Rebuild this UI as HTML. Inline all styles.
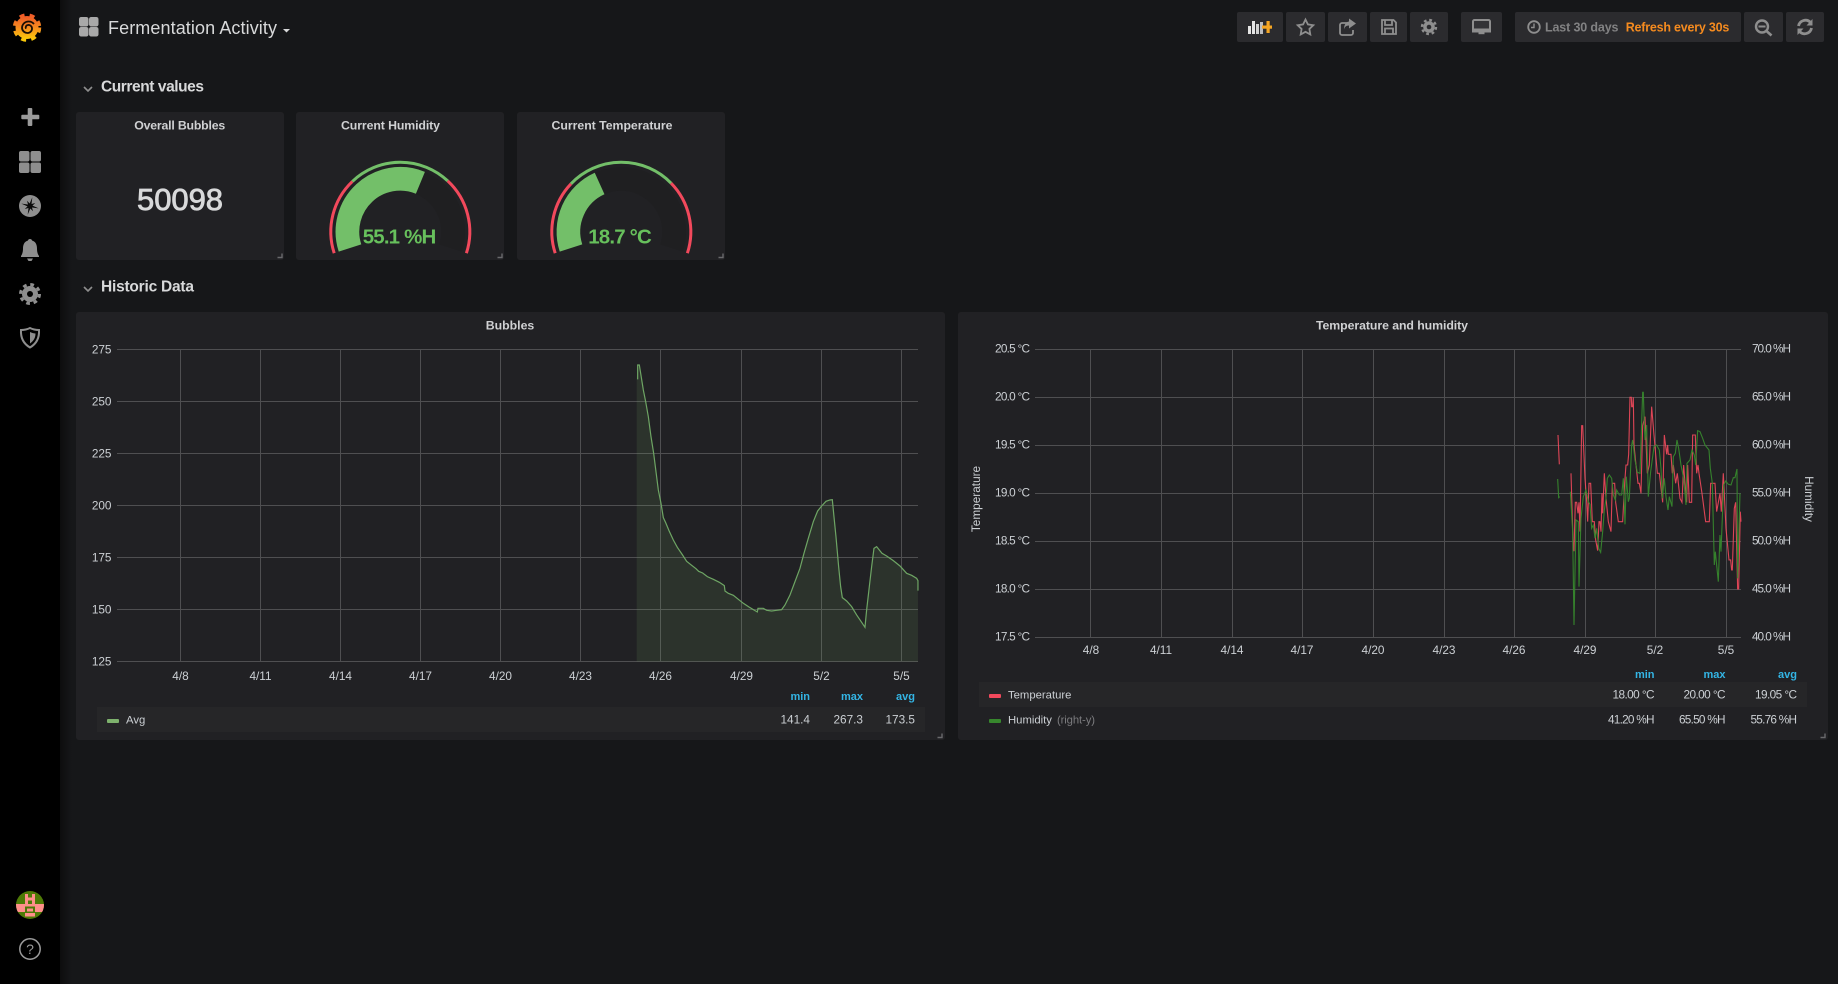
<!DOCTYPE html>
<html><head><meta charset="utf-8"><title>Fermentation Activity</title>
<style>
html,body{margin:0;padding:0;background:#161719;width:1838px;height:984px;overflow:hidden}
svg{display:block;position:absolute;left:0;top:0}
text{font-family:"Liberation Sans",sans-serif}
.t{font-size:11.8px;fill:#ccd0d4}
.b{font-size:12.3px;font-weight:bold;fill:#d0d1d3}
.h{font-size:11px;font-weight:bold;fill:#33b5e5}
.r{font-size:15.5px;font-weight:bold;fill:#d8d9da}
.g line{stroke:#4f4f51;stroke-width:1;shape-rendering:crispEdges}
.btn{fill:#2b2b2e}
.ic{fill:none;stroke:#8e8e8e;stroke-width:1.8}
.fi{fill:#8e8e8e}
</style></head><body>
<svg width="1838" height="984" viewBox="0 0 1838 984" xmlns="http://www.w3.org/2000/svg">
<defs>
<linearGradient id="sh" x1="0" x2="1" y1="0" y2="0"><stop offset="0" stop-color="#0d0d0e"/><stop offset="1" stop-color="#161719"/></linearGradient>
<linearGradient id="lg" x1="0" x2="0" y1="1" y2="0"><stop offset="0" stop-color="#fbca0a"/><stop offset=".5" stop-color="#f58a1f"/><stop offset="1" stop-color="#ef5a28"/></linearGradient>
<clipPath id="av"><circle cx="30" cy="905" r="14"/></clipPath>
</defs>
<rect width="1838" height="984" fill="#161719"/>
<rect x="60" y="0" width="12" height="984" fill="url(#sh)"/>
<rect x="0" y="0" width="60" height="984" fill="#000"/>

<!-- logo -->
<g>
<circle cx="27" cy="27.5" r="11.5" fill="url(#lg)"/>
<circle cx="27" cy="27.5" r="12.5" fill="none" stroke="url(#lg)" stroke-width="3.5" stroke-dasharray="5 5.2"/>
<path d="M26,28.7 A2.5,2.5 0 0 1 28,25 A3.5,3.5 0 0 1 32,28 A4.5,4.5 0 0 1 28,33 A5.5,5.5 0 0 1 22,28 A6.5,6.5 0 0 1 28,21.5 A7,7 0 0 1 34,24" fill="none" stroke="#1a0e05" stroke-width="1.8"/>
</g>

<!-- side icons -->
<g class="fi">
<rect x="27.7" y="108" width="4.6" height="18" rx="1" fill="#9a9a9a"/><rect x="21.3" y="114.7" width="18" height="4.6" rx="1" fill="#9a9a9a"/>
<rect x="19" y="151" width="10.5" height="10.5" rx="2"/><rect x="30.5" y="151" width="10.5" height="10.5" rx="2"/><rect x="19" y="162.5" width="10.5" height="10.5" rx="2"/><rect x="30.5" y="162.5" width="10.5" height="10.5" rx="2"/>
<circle cx="30" cy="206" r="11"/>
<polygon fill="#0a0a0a" transform="rotate(15 30 206)" points="30,197 30.96,203.69 34.24,201.76 32.31,205.04 39,206 32.31,206.96 34.24,210.24 30.96,208.31 30,215 29.04,208.31 25.76,210.24 27.69,206.96 21,206 27.69,205.04 25.76,201.76 29.04,203.69"/>
<path d="M30,239 c1.5,0 2,1 2,1.5 c3.5,1 5,4 5,8 c0,4 1,6 2,7.5 l0,1 H21 v-1 c1,-1.5 2,-3.5 2,-7.5 c0,-4 1.5,-7 5,-8 c0,-.5 .5,-1.5 2,-1.5 Z M27,258.5 h6 l-1.5,2.5 h-3 Z"/>
<circle cx="30" cy="294" r="8"/><circle cx="30" cy="294" r="9.5" fill="none" stroke="#8e8e8e" stroke-width="3" stroke-dasharray="3.7 3.76"/><circle cx="30" cy="294" r="3" fill="#000"/>
<path d="M30,328 C34,330 37,330 39,330 C39.5,338 36,344 30,347.5 C24,344 20.5,338 21,330 C23,330 26,330 30,328 Z" fill="none" stroke="#8e8e8e" stroke-width="2"/>
<path d="M30,332 C32,333 34,333.5 35.5,333.5 C35.5,338 33.5,341 30,343.5 Z"/>
</g>

<!-- avatar -->
<g clip-path="url(#av)">
<rect x="16" y="891" width="28" height="28" fill="#4e7a06"/>
<g fill="#ff8f8a">
<rect x="25" y="894" width="3" height="10"/><rect x="32" y="894" width="3" height="10"/><rect x="25" y="897.5" width="10" height="3"/>
<rect x="16" y="904" width="9" height="8"/><rect x="35" y="904" width="9" height="8"/><rect x="25" y="904" width="10" height="2.5"/>
<rect x="27" y="908.5" width="6" height="3"/><rect x="25" y="913" width="10" height="3.5"/><rect x="16" y="893" width="3" height="3"/><rect x="41" y="893" width="3" height="3"/>
</g>
</g>
<!-- help -->
<circle cx="30" cy="949" r="10.2" fill="none" stroke="#9a9a9a" stroke-width="1.5"/>
<text x="30" y="954" text-anchor="middle" font-size="14" fill="#9a9a9a">?</text>

<!-- top title -->
<g fill="#a9a9a9"><rect x="79" y="17" width="9.5" height="9.5" rx="2.2"/><rect x="89" y="17" width="9.5" height="9.5" rx="2.2"/><rect x="79" y="27" width="9.5" height="9.5" rx="2.2"/><rect x="89" y="27" width="9.5" height="9.5" rx="2.2"/></g>
<text x="108" y="34" font-size="18" fill="#d8d9da" textLength="169" lengthAdjust="spacing">Fermentation Activity</text>
<polygon points="283,29 290,29 286.5,32.5" fill="#d8d9da"/>

<!-- toolbar -->
<g>
<rect class="btn" x="1237" y="12" width="46" height="30" rx="2"/>
<rect class="btn" x="1286" y="12" width="39" height="30" rx="2"/>
<rect class="btn" x="1328" y="12" width="39" height="30" rx="2"/>
<rect class="btn" x="1370" y="12" width="37" height="30" rx="2"/>
<rect class="btn" x="1410" y="12" width="38" height="30" rx="2"/>
<rect class="btn" x="1461" y="12" width="41" height="30" rx="2"/>
<rect class="btn" x="1515" y="12" width="226" height="30" rx="2"/>
<rect class="btn" x="1744" y="12" width="39" height="30" rx="2"/>
<rect class="btn" x="1786" y="12" width="38" height="30" rx="2"/>
<!-- graph+ -->
<rect x="1248" y="26" width="3" height="8" fill="#e4e4e4"/><rect x="1252" y="21" width="3" height="13" fill="#e4e4e4"/><rect x="1256" y="24" width="3" height="10" fill="#d0d0d0"/><rect x="1260" y="22" width="3" height="12" fill="#bdbdbd"/>
<rect x="1266.5" y="21" width="3.2" height="12" fill="#f5a623"/><rect x="1262" y="25.5" width="10" height="3.2" fill="#f5a623"/>
<!-- star -->
<polygon class="ic" points="1305.5,19.5 1307.9,24.4 1313.3,25.2 1309.4,29 1310.3,34.4 1305.5,31.8 1300.7,34.4 1301.6,29 1297.7,25.2 1303.1,24.4"/>
<!-- share -->
<path class="ic" d="M1349,23 h-7 a2,2 0 0 0 -2,2 v8 a2,2 0 0 0 2,2 h9 a2,2 0 0 0 2,-2 v-3"/>
<path class="fi" d="M1349,18.5 L1356,23.5 L1349,28.5 V25.5 C1346,25.5 1344.5,27 1344,29.5 C1344,24.5 1346,22 1349,21.5 Z"/>
<!-- save -->
<path class="ic" d="M1382,20 h11.5 l2.5,2.5 v11.5 h-14 Z M1385,20 v5 h7 v-5 M1385,34 v-5.5 h8 v5.5"/>
<!-- gear -->
<circle class="fi" cx="1429" cy="27" r="5.8"/><circle cx="1429" cy="27" r="7" fill="none" stroke="#8e8e8e" stroke-width="2.4" stroke-dasharray="2.75 2.75"/><circle cx="1429" cy="27" r="2.3" fill="#2b2b2e"/>
<!-- tv -->
<rect x="1473" y="20" width="17" height="11" rx="1.5" fill="#333336" stroke="#8e8e8e" stroke-width="2"/>
<rect x="1472" y="28.5" width="19" height="4" fill="#8e8e8e"/><rect x="1478.5" y="32" width="6" height="2.2" fill="#8e8e8e"/>
<!-- clock -->
<circle cx="1534" cy="27" r="5.8" fill="none" stroke="#8e8e8e" stroke-width="1.8"/><path d="M1534,23.5 V27.5 H1531" fill="none" stroke="#8e8e8e" stroke-width="1.4"/>
<text x="1545" y="31.5" font-size="12.5" font-weight="bold" fill="#828283" textLength="73.5" lengthAdjust="spacing">Last 30 days</text>
<text x="1625.7" y="31.5" font-size="12.5" font-weight="bold" fill="#f58b1f" textLength="103.6" lengthAdjust="spacing">Refresh every 30s</text>
<!-- zoom out -->
<circle cx="1762" cy="26.5" r="6" fill="none" stroke="#8e8e8e" stroke-width="2.4"/><rect x="1758.5" y="25.5" width="7" height="2" fill="#8e8e8e"/><path d="M1766.5,31 L1771.5,35.5" stroke="#8e8e8e" stroke-width="2.6"/>
<!-- refresh -->
<path d="M1798.5,26 A7,7 0 0 1 1810.5,22.5 M1811.5,28 A7,7 0 0 1 1799.5,31.5" fill="none" stroke="#8e8e8e" stroke-width="2.8"/>
<polygon class="fi" points="1812.5,19 1812.5,25.5 1806.5,25.5"/><polygon class="fi" points="1797.5,35 1797.5,28.5 1803.5,28.5"/>
</g>

<!-- rows -->
<path d="M84,87 L88,91 L92,87" fill="none" stroke="#8e8e8e" stroke-width="1.6"/>
<text class="r" x="101" y="91.5" textLength="103" lengthAdjust="spacing">Current values</text>
<path d="M84,287 L88,291 L92,287" fill="none" stroke="#8e8e8e" stroke-width="1.6"/>
<text class="r" x="101" y="291.5" textLength="93" lengthAdjust="spacing">Historic Data</text>

<!-- panels -->
<g fill="#212124">
<rect x="76" y="112" width="208" height="148" rx="3"/>
<rect x="296" y="112" width="208" height="148" rx="3"/>
<rect x="517" y="112" width="208" height="148" rx="3"/>
<rect x="76" y="312" width="869" height="428" rx="3"/>
<rect x="958" y="312" width="870" height="428" rx="3"/>
</g>
<g fill="none" stroke="#69696b" stroke-width="1.4">
<path d="M282,253.5 V257.5 H277.5"/><path d="M502,253.5 V257.5 H497.5"/><path d="M723,253.5 V257.5 H718.5"/><path d="M942,733.5 V737.5 H937.5"/><path d="M1825,733.5 V737.5 H1820.5"/>
</g>

<text class="b" x="179.7" y="129.5" text-anchor="middle" textLength="91" lengthAdjust="spacing">Overall Bubbles</text>
<text class="b" x="390.5" y="129.5" text-anchor="middle" textLength="99" lengthAdjust="spacing">Current Humidity</text>
<text class="b" x="612" y="129.5" text-anchor="middle" textLength="121" lengthAdjust="spacing">Current Temperature</text>
<text x="180" y="210" text-anchor="middle" font-size="31" fill="#d8d9da" stroke="#d8d9da" stroke-width=".8" textLength="86" lengthAdjust="spacing">50098</text>

<!-- gauge 1 -->
<g fill="none">
<path d="M350,248 A52.85,52.85 0 1 1 450.6,248" stroke="#1f1f21" stroke-width="23.7"/>
<path d="M350,248 A52.85,52.85 0 0 1 420.4,182.8" stroke="#73bf69" stroke-width="23.7"/>
<path d="M334.2,253.2 A69.5,69.5 0 0 1 352.4,181.4" stroke="#f2495c" stroke-width="3"/>
<path d="M352.4,181.4 A69.5,69.5 0 0 1 447.7,180.9" stroke="#73bf69" stroke-width="3"/>
<path d="M447.7,180.9 A69.5,69.5 0 0 1 466.4,253.2" stroke="#f2495c" stroke-width="3"/>
</g>
<text x="399.5" y="243.5" text-anchor="middle" font-size="20.5" font-weight="bold" fill="#67c05c" textLength="73.5" lengthAdjust="spacing">55.1 %H</text>
<!-- gauge 2 -->
<g fill="none">
<path d="M571,248 A52.85,52.85 0 1 1 671.6,248" stroke="#1f1f21" stroke-width="23.7"/>
<path d="M571,248 A52.85,52.85 0 0 1 599.6,183.5" stroke="#73bf69" stroke-width="23.7"/>
<path d="M555.2,253.2 A69.5,69.5 0 0 1 571,183.8" stroke="#f2495c" stroke-width="3"/>
<path d="M571,183.8 A69.5,69.5 0 0 1 671.1,183.2" stroke="#73bf69" stroke-width="3"/>
<path d="M671.1,183.2 A69.5,69.5 0 0 1 687.4,253.2" stroke="#f2495c" stroke-width="3"/>
</g>
<text x="620" y="243.5" text-anchor="middle" font-size="20.5" font-weight="bold" fill="#67c05c" textLength="63.5" lengthAdjust="spacing">18.7 °C</text>

<!-- chart 1 -->
<text class="b" x="510" y="329.5" text-anchor="middle">Bubbles</text>
<g class="g">
<line x1="117" x2="918" y1="349.5" y2="349.5"/><line x1="117" x2="918" y1="401.5" y2="401.5"/><line x1="117" x2="918" y1="453.5" y2="453.5"/><line x1="117" x2="918" y1="505.5" y2="505.5"/><line x1="117" x2="918" y1="557.5" y2="557.5"/><line x1="117" x2="918" y1="609.5" y2="609.5"/><line x1="117" x2="918" y1="661.5" y2="661.5"/>
<line x1="180.5" x2="180.5" y1="349" y2="661"/><line x1="260.5" x2="260.5" y1="349" y2="661"/><line x1="340.5" x2="340.5" y1="349" y2="661"/><line x1="420.5" x2="420.5" y1="349" y2="661"/><line x1="500.5" x2="500.5" y1="349" y2="661"/><line x1="580.5" x2="580.5" y1="349" y2="661"/><line x1="660.5" x2="660.5" y1="349" y2="661"/><line x1="741.5" x2="741.5" y1="349" y2="661"/><line x1="821.5" x2="821.5" y1="349" y2="661"/><line x1="901.5" x2="901.5" y1="349" y2="661"/>
</g>
<g transform="translate(600,340) scale(.3333)">
<path fill="#7eb26d" fill-opacity=".12" d="M110,965 L110,118 L113,75 L118,75 L122,100 L130,150 L137,185 L145,230 L153,290 L161,340 L168,395 L175,450 L183,490 L190,533 L197,548 L207,572 L220,600 L232,622 L247,644 L260,664 L275,676 L288,686 L296,694 L308,699 L322,710 L340,718 L358,727 L373,737 L375,753 L385,760 L400,766 L415,778 L430,790 L447,801 L462,810 L472,816 L474,805 L490,805 L500,811 L515,813 L530,811 L545,809 L555,795 L570,765 L585,725 L600,685 L612,640 L625,595 L640,545 L653,513 L665,498 L678,484 L690,480 L697,479 L702,530 L708,590 L716,680 L722,740 L727,773 L740,783 L755,800 L770,825 L785,847 L795,862 L800,810 L808,740 L815,680 L822,625 L830,620 L838,630 L846,640 L860,648 L880,662 L900,678 L920,700 L935,706 L950,715 L954,722 L954,965 Z"/>
<path fill="none" stroke="#6ea564" stroke-width="3.6" d="M113,118 L113,75 L118,75 L122,100 L130,150 L137,185 L145,230 L153,290 L161,340 L168,395 L175,450 L183,490 L190,533 L197,548 L207,572 L220,600 L232,622 L247,644 L260,664 L275,676 L288,686 L296,694 L308,699 L322,710 L340,718 L358,727 L373,737 L375,753 L385,760 L400,766 L415,778 L430,790 L447,801 L462,810 L472,816 L474,805 L490,805 L500,811 L515,813 L530,811 L545,809 L555,795 L570,765 L585,725 L600,685 L612,640 L625,595 L640,545 L653,513 L665,498 L678,484 L690,480 L697,479 L702,530 L708,590 L716,680 L722,740 L727,773 L740,783 L755,800 L770,825 L785,847 L795,862 L800,810 L808,740 L815,680 L822,625 L830,620 L838,630 L846,640 L860,648 L880,662 L900,678 L920,700 L935,706 L950,715 L954,722 L954,752"/>
</g>
<g class="t" text-anchor="end">
<text x="111.5" y="353.5">275</text><text x="111.5" y="405.5">250</text><text x="111.5" y="457.5">225</text><text x="111.5" y="509.5">200</text><text x="111.5" y="561.5">175</text><text x="111.5" y="613.5">150</text><text x="111.5" y="665.5">125</text>
</g>
<g class="t" text-anchor="middle">
<text x="180.5" y="680">4/8</text><text x="260.5" y="680">4/11</text><text x="340.5" y="680">4/14</text><text x="420.5" y="680">4/17</text><text x="500.5" y="680">4/20</text><text x="580.5" y="680">4/23</text><text x="660.5" y="680">4/26</text><text x="741.5" y="680">4/29</text><text x="821.5" y="680">5/2</text><text x="901.5" y="680">5/5</text>
</g>
<rect x="97" y="707" width="828" height="25" fill="#262628"/>
<rect x="107" y="719" width="12" height="4" rx="1" fill="#7eb26d"/>
<text class="t" x="126" y="723.5" style="font-size:11.3px">Avg</text>
<g text-anchor="end"><text x="810" y="700" class="h">min</text><text x="863" y="700" class="h">max</text><text x="915" y="700" class="h">avg</text></g>
<g class="t" text-anchor="end"><text x="810" y="723.5">141.4</text><text x="863" y="723.5">267.3</text><text x="915" y="723.5">173.5</text></g>

<!-- chart 2 -->
<text class="b" x="1392" y="329.5" text-anchor="middle" textLength="152" lengthAdjust="spacing">Temperature and humidity</text>
<g class="g">
<line x1="1035" x2="1741" y1="349.5" y2="349.5"/><line x1="1035" x2="1741" y1="397.5" y2="397.5"/><line x1="1035" x2="1741" y1="445.5" y2="445.5"/><line x1="1035" x2="1741" y1="493.5" y2="493.5"/><line x1="1035" x2="1741" y1="541.5" y2="541.5"/><line x1="1035" x2="1741" y1="589.5" y2="589.5"/><line x1="1035" x2="1741" y1="637.5" y2="637.5"/>
<line x1="1090.5" x2="1090.5" y1="349" y2="637"/><line x1="1161.5" x2="1161.5" y1="349" y2="637"/><line x1="1232.5" x2="1232.5" y1="349" y2="637"/><line x1="1302.5" x2="1302.5" y1="349" y2="637"/><line x1="1373.5" x2="1373.5" y1="349" y2="637"/><line x1="1444.5" x2="1444.5" y1="349" y2="637"/><line x1="1514.5" x2="1514.5" y1="349" y2="637"/><line x1="1585.5" x2="1585.5" y1="349" y2="637"/><line x1="1655.5" x2="1655.5" y1="349" y2="637"/><line x1="1726.5" x2="1726.5" y1="349" y2="637"/>
</g>
<g transform="translate(1550,385) scale(.3333)" fill="none" stroke-width="3.3">
<path stroke="#f2495c" stroke-opacity=".9" d="M24,150 L28,238 M63,265 L70,497 L72,497 L76,352 L80,352 L84,385 L87,352 L90,440 L95,122 L98,122 L105,280 L110,350 L113,410 L117,295 L122,295 L127,410 L133,410 L137,465 L143,497 L147,410 L150,410 L153,440 L156,325 L158,385 L163,265 L168,340 L175,410 L183,440 L187,295 L194,295 L197,352 L205,410 L218,410 L224,295 L228,240 L233,240 L236,208 L240,37 L244,37 L245,65 L248,65 L250,37 L252,180 L258,240 L264,295 L268,295 L273,325 L278,122 L285,95 L292,265 L298,240 L305,65 L312,150 L322,265 L328,265 L338,352 L343,150 L350,208 L353,180 L355,208 L363,208 L367,265 L370,240 L377,295 L382,265 L390,340 L396,352 L401,240 L405,295 L410,352 L413,240 L418,352 L425,352 L428,150 L436,150 L440,265 L444,240 L447,265 L456,325 L467,410 L478,410 L482,295 L488,295 L495,295 L500,380 L510,325 L514,380 L520,265 L528,430 L537,525 L542,525 L545,555 L547,555 L553,370 L557,352 L563,612 L566,612 L571,380 L573,410"/>
<path stroke="#37872d" stroke-opacity=".95" d="M23,282 L26,338 L29,335 M61,320 L68,440 L72,720 L78,405 L85,410 L87,605 L93,400 L100,335 L108,315 L115,350 L120,358 L125,430 L130,420 L135,460 L140,430 L146,490 L152,502 L158,440 L163,375 L168,340 L172,280 L178,270 L185,280 L190,330 L196,345 L200,315 L208,330 L215,330 L220,280 L225,418 L229,275 L235,350 L238,340 L245,180 L248,165 L255,225 L262,262 L270,265 L278,22 L280,22 L283,120 L285,165 L290,120 L295,335 L302,260 L312,185 L320,180 L328,195 L333,250 L337,340 L343,280 L348,335 L354,375 L358,335 L366,365 L370,215 L376,205 L381,165 L386,190 L393,240 L401,280 L408,360 L411,235 L420,225 L426,195 L433,210 L437,240 L443,137 L450,140 L458,160 L465,180 L477,195 L481,250 L487,295 L493,540 L496,500 L505,590 L510,450 L513,500 L521,300 L527,288 L535,298 L543,300 L550,278 L555,278 L561,252 L563,580 L570,325"/>
</g>
<g class="t" text-anchor="end">
<text x="1030" y="352.5" textLength="35" lengthAdjust="spacing">20.5 °C</text><text x="1030" y="400.5" textLength="35" lengthAdjust="spacing">20.0 °C</text><text x="1030" y="448.5" textLength="35" lengthAdjust="spacing">19.5 °C</text><text x="1030" y="496.5" textLength="35" lengthAdjust="spacing">19.0 °C</text><text x="1030" y="544.5" textLength="35" lengthAdjust="spacing">18.5 °C</text><text x="1030" y="592.5" textLength="35" lengthAdjust="spacing">18.0 °C</text><text x="1030" y="640.5" textLength="35" lengthAdjust="spacing">17.5 °C</text>
</g>
<g class="t">
<text x="1752" y="352.5" textLength="39" lengthAdjust="spacing">70.0 %H</text><text x="1752" y="400.5" textLength="39" lengthAdjust="spacing">65.0 %H</text><text x="1752" y="448.5" textLength="39" lengthAdjust="spacing">60.0 %H</text><text x="1752" y="496.5" textLength="39" lengthAdjust="spacing">55.0 %H</text><text x="1752" y="544.5" textLength="39" lengthAdjust="spacing">50.0 %H</text><text x="1752" y="592.5" textLength="39" lengthAdjust="spacing">45.0 %H</text><text x="1752" y="640.5" textLength="39" lengthAdjust="spacing">40.0 %H</text>
</g>
<g class="t" text-anchor="middle">
<text x="1091" y="654">4/8</text><text x="1161" y="654">4/11</text><text x="1232" y="654">4/14</text><text x="1302" y="654">4/17</text><text x="1373" y="654">4/20</text><text x="1444" y="654">4/23</text><text x="1514" y="654">4/26</text><text x="1585" y="654">4/29</text><text x="1655" y="654">5/2</text><text x="1726" y="654">5/5</text>
</g>
<text class="t" transform="translate(980,499) rotate(-90)" text-anchor="middle">Temperature</text>
<text class="t" transform="translate(1805,499) rotate(90)" text-anchor="middle">Humidity</text>
<rect x="979" y="682" width="828" height="25" fill="#262628"/>
<rect x="989" y="694" width="12" height="4" rx="1" fill="#f2495c"/>
<text class="t" x="1008" y="698.5" style="font-size:11.3px">Temperature</text>
<rect x="989" y="719" width="12" height="4" rx="1" fill="#37872d"/>
<text class="t" x="1008" y="723.5" style="font-size:11.3px">Humidity</text>
<text x="1057" y="723.5" font-size="11.3" fill="#7b7b7e" textLength="38" lengthAdjust="spacing">(right-y)</text>
<g text-anchor="end"><text x="1654.5" y="678" class="h">min</text><text x="1725.5" y="678" class="h">max</text><text x="1797" y="678" class="h">avg</text></g>
<g class="t" text-anchor="end">
<text x="1654.5" y="698.5" textLength="42" lengthAdjust="spacing">18.00 °C</text><text x="1725.5" y="698.5" textLength="42" lengthAdjust="spacing">20.00 °C</text><text x="1797" y="698.5" textLength="42" lengthAdjust="spacing">19.05 °C</text>
<text x="1654.5" y="723.5" textLength="46.5" lengthAdjust="spacing">41.20 %H</text><text x="1725.5" y="723.5" textLength="46.5" lengthAdjust="spacing">65.50 %H</text><text x="1797" y="723.5" textLength="46.5" lengthAdjust="spacing">55.76 %H</text>
</g>
</svg>
</body></html>
